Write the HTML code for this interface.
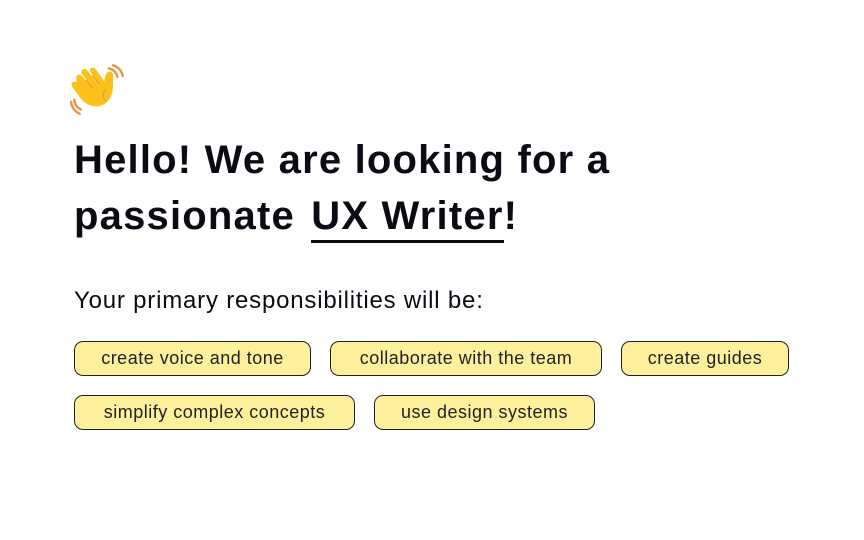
<!DOCTYPE html>
<html><head><meta charset="utf-8"><style>
body{margin:0;width:864px;height:540px;background:#fff;font-family:"Liberation Sans",sans-serif;color:#0b0b14;position:relative;overflow:hidden}
h1{position:absolute;left:74px;top:132px;margin:0;font-size:40px;line-height:56px;font-weight:700;letter-spacing:1.2px;white-space:nowrap}
.u{display:inline-block;border-bottom:3.5px solid #0b0b14;line-height:48px;margin-left:4px}
.sub{position:absolute;left:74px;top:287px;font-size:24px;letter-spacing:0.8px;white-space:nowrap}
.p{position:absolute;height:33px;border:1.5px solid #222;border-radius:9px;background:#fdf09c;font-size:18px;letter-spacing:0.5px;line-height:33px;text-align:center;color:#222;box-sizing:content-box;white-space:nowrap}
</style></head><body>
<svg style="position:absolute;left:70px;top:64px" width="56" height="52" viewBox="0 0 52 48">
<path d="M36 4a10 10 0 0 1 8 8M40 1a13 13 0 0 1 9 10" stroke="#e8924a" stroke-width="2.2" fill="none" stroke-linecap="round"/>
<path d="M4 33a10 10 0 0 0 6 9M1 35a13 13 0 0 0 8 11" stroke="#e8924a" stroke-width="2.2" fill="none" stroke-linecap="round"/>
<path d="M6 14c-1-4 3-6 5-3l9 10-9-12c-2-4 3-6 5-3l9 11-6-10c-2-4 3-5 5-2l8 11c0-5 2-10 6-9 3 1 2 7 2 12 0 9-3 16-10 19-7 3-15 0-20-6l-8-11c-2-4 2-6 4-4z" fill="#fcc21b"/>
<path d="M15 15l6 7M21 11l6 7M33 24c-3 3-3 7 0 10" stroke="#e8924a" stroke-width="1" fill="none" stroke-linecap="round"/>
</svg>
<h1>Hello! We are looking for a<br>passionate <span class="u">UX Writer</span>!</h1>
<div class="sub">Your primary responsibilities will be:</div>
<div class="p" style="left:74px;top:341px;width:235px">create voice and tone</div>
<div class="p" style="left:330px;top:341px;width:270px">collaborate with the team</div>
<div class="p" style="left:621px;top:341px;width:166px">create guides</div>
<div class="p" style="left:74px;top:395px;width:279px">simplify complex concepts</div>
<div class="p" style="left:374px;top:395px;width:219px">use design systems</div>
</body></html>
